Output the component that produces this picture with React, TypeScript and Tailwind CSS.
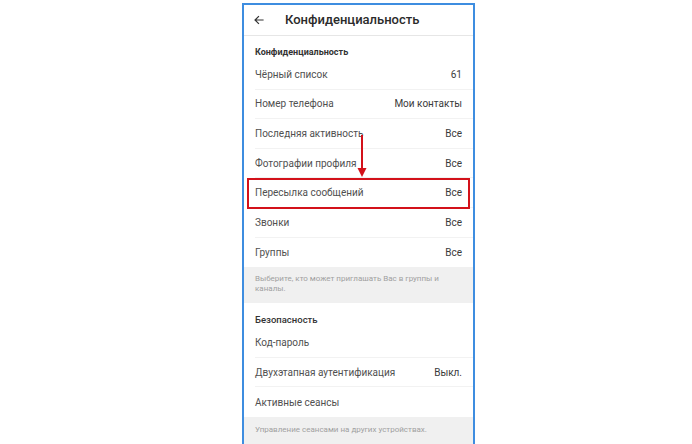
import React from "react";

const privacyRows: [string, string][] = [
  ["Чёрный список", "61"],
  ["Номер телефона", "Мои контакты"],
  ["Последняя активность", "Все"],
  ["Фотографии профиля", "Все"],
  ["Пересылка сообщений", "Все"],
  ["Звонки", "Все"],
  ["Группы", "Все"],
];

const securityRows: [string, string][] = [
  ["Код-пароль", ""],
  ["Двухэтапная аутентификация", "Выкл."],
  ["Активные сеансы", ""],
];

function Row({ label, value, last }: { label: string; value: string; last?: boolean }) {
  return (
    <div className="pl-[11px] h-[29.6px]">
      <div
        className={`h-full flex items-center justify-between pr-[11px] ${last ? "" : "border-b border-[#f2f2f2]"}`}
      >
        <span className="text-[10px] text-[#505050]">{label}</span>
        <span className="text-[10px] text-[#3a3a3a]">{value}</span>
      </div>
    </div>
  );
}

export default function App() {
  return (
    <div
      className="w-[692px] h-[444px] bg-white overflow-hidden pt-[3px]"
      style={{ fontFamily: "Roboto, 'Noto Sans', sans-serif" }}
    >
      <div className="relative ml-[242px] w-[233px] h-[441px] border-x-2 border-t-2 border-[#3e8de0] bg-white">
        <div className="h-[31px] flex items-center border-b border-[#e6e6e6]">
          <svg width="12" height="12" viewBox="0 0 24 24" className="ml-[9px]" fill="none" stroke="#333" strokeWidth="2.4" strokeLinecap="square">
            <path d="M20 12H5M11 5l-7 7 7 7" />
          </svg>
          <span className="ml-[20px] text-[13px] font-medium text-[#2b2b2b]">Конфиденциальность</span>
        </div>

        <div className="h-[24px] flex items-end pb-[2px] pl-[11px]">
          <span className="text-[9px] font-bold text-[#333] leading-[12px]">Конфиденциальность</span>
        </div>
        {privacyRows.map(([l, v], i) => (
          <Row key={l} label={l} value={v} last={i === privacyRows.length - 1} />
        ))}
        <div className="bg-[#f0f0f0] h-[36px] pl-[11px] pr-[20px] pt-[7px]">
          <p className="text-[8px] leading-[10px] text-[#a0a0a0]">
            Выберите, кто может приглашать Вас в группы и каналы.
          </p>
        </div>

        <div className="h-[25px] flex items-end pb-[2px] pl-[11px]">
          <span className="text-[9.5px] font-medium text-[#333] leading-[12px]">Безопасность</span>
        </div>
        {securityRows.map(([l, v], i) => (
          <Row key={l} label={l} value={v} last={i === securityRows.length - 1} />
        ))}
        <div className="bg-[#f0f0f0] h-[40px] pl-[11px] pt-[8px]">
          <p className="text-[8px] leading-[10px] text-[#a0a0a0]">
            Управление сеансами на других устройствах.
          </p>
        </div>

        <div className="absolute left-[3px] top-[173px] w-[223px] h-[31px] border-[2.5px] border-[#d3111a]" />
        <svg className="absolute left-[112px] top-[130px]" width="12" height="43" viewBox="0 0 12 43">
          <line x1="6" y1="0" x2="6" y2="35" stroke="#d3111a" strokeWidth="2" />
          <path d="M1.5 33 L10.5 33 L6 42 Z" fill="#d3111a" />
        </svg>
      </div>
    </div>
  );
}
